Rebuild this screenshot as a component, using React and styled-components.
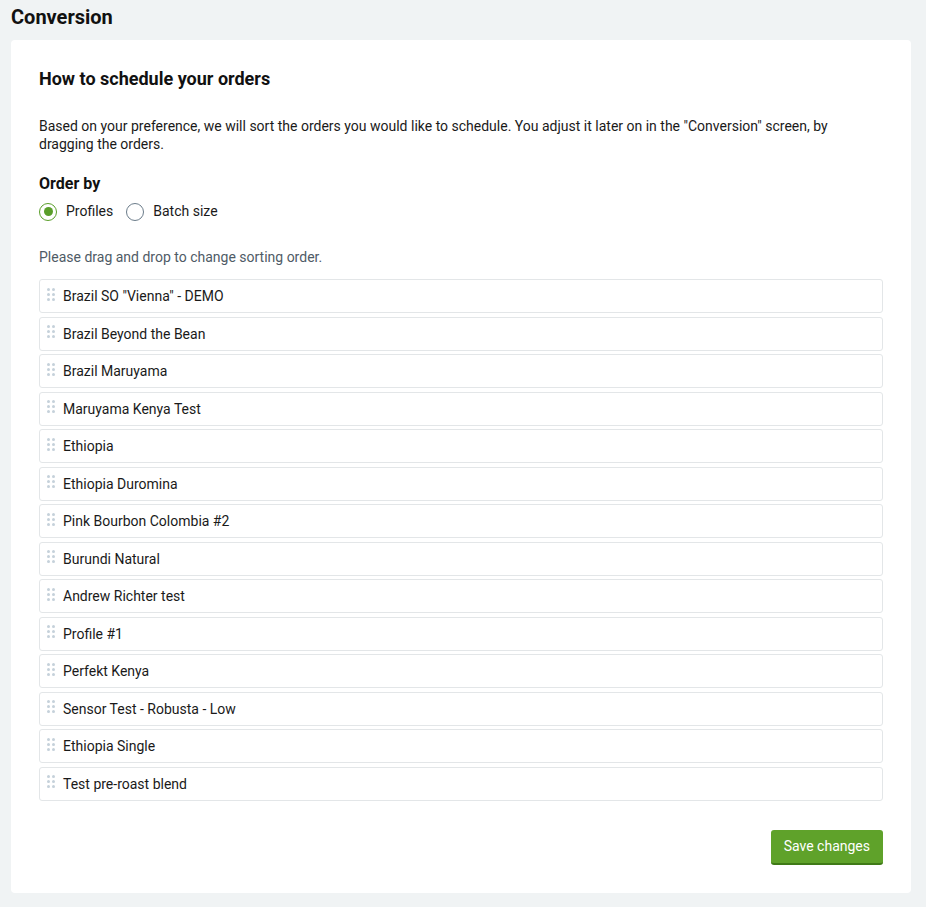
import React, { useState } from 'react';
import styled, { createGlobalStyle } from 'styled-components';

const GlobalStyle = createGlobalStyle`
  html, body {
    margin: 0;
    padding: 0;
    background: #f0f3f4;
    font-family: Roboto, "Liberation Sans", Arial, sans-serif;
    color: #1a1a1a;
  }
`;

const Page = styled.div`
  padding: 5px 15px 16px 11px;
`;

const PageTitle = styled.h1`
  margin: 0 0 10px 0;
  font-size: 20px;
  line-height: 25px;
  font-weight: 700;
  color: #111;
`;

const Card = styled.section`
  background: #fff;
  border-radius: 4px;
  padding: 28px;
`;

const Heading = styled.h2`
  margin: 0 0 27px 0;
  font-size: 18px;
  line-height: 22px;
  font-weight: 700;
  color: #111;
`;

const Intro = styled.p`
  margin: 0 0 21px 0;
  font-size: 14px;
  line-height: 18px;
  color: #1a1a1a;
`;

const Label = styled.div`
  font-size: 16px;
  font-weight: 700;
  line-height: 20px;
  color: #111;
`;

const RadioGroup = styled.div`
  display: flex;
  align-items: center;
  gap: 13px;
  margin-top: 8px;
`;

const RadioOption = styled.label`
  display: flex;
  align-items: center;
  gap: 9px;
  font-size: 14px;
  line-height: 19px;
  color: #1a1a1a;
  cursor: pointer;
`;

const RadioCircle = styled.span`
  width: 16px;
  height: 16px;
  border-radius: 50%;
  border: 1.5px solid ${p => (p.checked ? '#5a9e2a' : '#6b7c8a')};
  display: flex;
  align-items: center;
  justify-content: center;
  box-sizing: content-box;

  &::after {
    content: '';
    width: 9px;
    height: 9px;
    border-radius: 50%;
    background: ${p => (p.checked ? '#5a9e2a' : 'transparent')};
  }
`;

const Hint = styled.div`
  margin-top: 27px;
  font-size: 14px;
  line-height: 18px;
  color: #4f5b66;
`;

const List = styled.div`
  display: flex;
  flex-direction: column;
  gap: 3.5px;
  margin-top: 13px;
`;

const Row = styled.div`
  display: flex;
  align-items: center;
  gap: 8px;
  height: 34px;
  box-sizing: border-box;
  padding: 0 7px;
  border: 1px solid #e3e6e8;
  border-radius: 3px;
  font-size: 14px;
  color: #1a1a1a;
  background: #fff;
  cursor: grab;
`;

const Handle = styled.span`
  display: grid;
  grid-template-columns: 3px 3px;
  grid-auto-rows: 3px;
  gap: 2px 2px;
  margin-top: -4px;

  span {
    width: 3px;
    height: 3px;
    border-radius: 50%;
    background: #c5d1da;
  }
`;

const Footer = styled.div`
  display: flex;
  justify-content: flex-end;
  margin-top: 29px;
`;

const SaveButton = styled.button`
  background: #5fa22a;
  color: #fff;
  border: none;
  border-bottom: 2px solid #3f7a17;
  border-radius: 3px;
  height: 35px;
  padding: 0 13px;
  font-family: Roboto, "Liberation Sans", Arial, sans-serif;
  font-size: 14px;
  cursor: pointer;
`;

const orders = [
  'Brazil SO "Vienna" - DEMO',
  'Brazil Beyond the Bean',
  'Brazil Maruyama',
  'Maruyama Kenya Test',
  'Ethiopia',
  'Ethiopia Duromina',
  'Pink Bourbon Colombia #2',
  'Burundi Natural',
  'Andrew Richter test',
  'Profile #1',
  'Perfekt Kenya',
  'Sensor Test - Robusta - Low',
  'Ethiopia Single',
  'Test pre-roast blend',
];

export default function App() {
  const [orderBy, setOrderBy] = useState('profiles');

  return (
    <Page>
      <GlobalStyle />
      <PageTitle>Conversion</PageTitle>
      <Card>
        <Heading>How to schedule your orders</Heading>
        <Intro>
          Based on your preference, we will sort the orders you would like to schedule. You adjust it later on in the "Conversion" screen, by dragging the orders.
        </Intro>
        <Label>Order by</Label>
        <RadioGroup>
          <RadioOption onClick={() => setOrderBy('profiles')}>
            <RadioCircle checked={orderBy === 'profiles'} />
            Profiles
          </RadioOption>
          <RadioOption onClick={() => setOrderBy('batch')}>
            <RadioCircle checked={orderBy === 'batch'} />
            Batch size
          </RadioOption>
        </RadioGroup>
        <Hint>Please drag and drop to change sorting order.</Hint>
        <List>
          {orders.map(name => (
            <Row key={name}>
              <Handle>
                <span /><span /><span /><span /><span /><span />
              </Handle>
              {name}
            </Row>
          ))}
        </List>
        <Footer>
          <SaveButton>Save changes</SaveButton>
        </Footer>
      </Card>
    </Page>
  );
}
